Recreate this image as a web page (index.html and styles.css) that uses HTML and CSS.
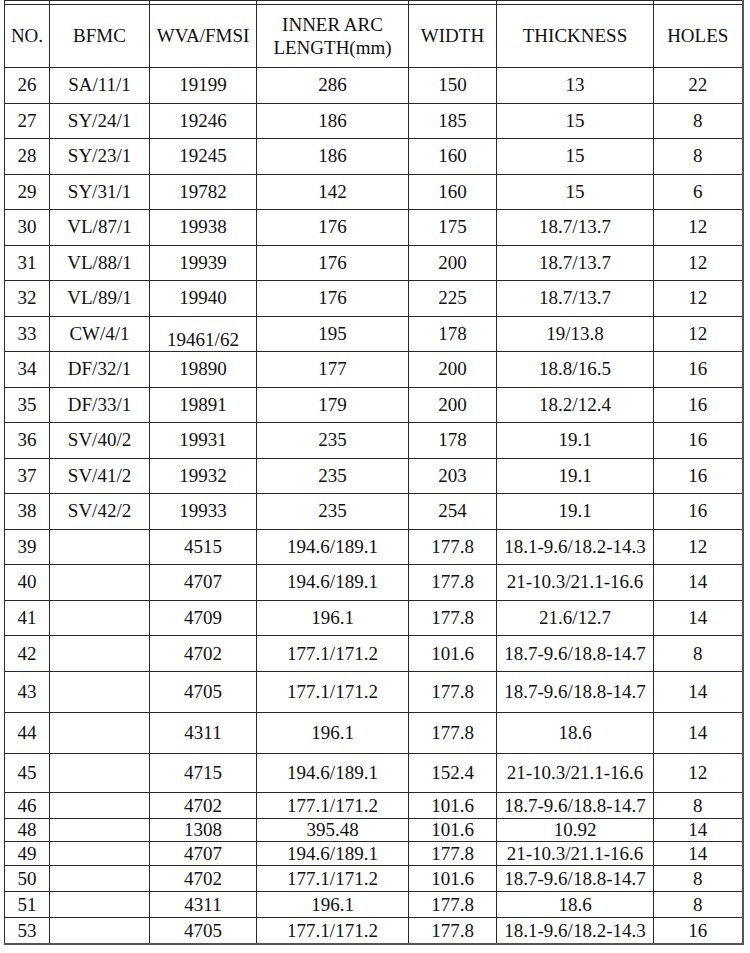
FILE: index.html
```html
<!DOCTYPE html>
<html>
<head>
<meta charset="utf-8">
<link rel="stylesheet" href="styles.css">
</head>
<body>
<table class="spec">
<colgroup>
<col class="c-no"><col class="c-bfmc"><col class="c-wva"><col class="c-arc"><col class="c-width"><col class="c-thick"><col class="c-holes">
</colgroup>
<tbody>
<tr class="r-top"><td></td><td></td><td></td><td></td><td></td><td></td><td></td></tr>
<tr class="r-head"><td>NO.</td><td>BFMC</td><td>WVA/FMSI</td><td class="two">INNER ARC<br>LENGTH(mm)</td><td>WIDTH</td><td>THICKNESS</td><td>HOLES</td></tr>
<tr class="r-std"><td>26</td><td>SA/11/1</td><td>19199</td><td>286</td><td>150</td><td>13</td><td>22</td></tr>
<tr class="r-std"><td>27</td><td>SY/24/1</td><td>19246</td><td>186</td><td>185</td><td>15</td><td>8</td></tr>
<tr class="r-std"><td>28</td><td>SY/23/1</td><td>19245</td><td>186</td><td>160</td><td>15</td><td>8</td></tr>
<tr class="r-std"><td>29</td><td>SY/31/1</td><td>19782</td><td>142</td><td>160</td><td>15</td><td>6</td></tr>
<tr class="r-std"><td>30</td><td>VL/87/1</td><td>19938</td><td>176</td><td>175</td><td>18.7/13.7</td><td>12</td></tr>
<tr class="r-std"><td>31</td><td>VL/88/1</td><td>19939</td><td>176</td><td>200</td><td>18.7/13.7</td><td>12</td></tr>
<tr class="r-std"><td>32</td><td>VL/89/1</td><td>19940</td><td>176</td><td>225</td><td>18.7/13.7</td><td>12</td></tr>
<tr class="r-std"><td>33</td><td>CW/4/1</td><td class="low">19461/62</td><td>195</td><td>178</td><td>19/13.8</td><td>12</td></tr>
<tr class="r-std"><td>34</td><td>DF/32/1</td><td>19890</td><td>177</td><td>200</td><td>18.8/16.5</td><td>16</td></tr>
<tr class="r-std"><td>35</td><td>DF/33/1</td><td>19891</td><td>179</td><td>200</td><td>18.2/12.4</td><td>16</td></tr>
<tr class="r-std"><td>36</td><td>SV/40/2</td><td>19931</td><td>235</td><td>178</td><td>19.1</td><td>16</td></tr>
<tr class="r-std"><td>37</td><td>SV/41/2</td><td>19932</td><td>235</td><td>203</td><td>19.1</td><td>16</td></tr>
<tr class="r-std"><td>38</td><td>SV/42/2</td><td>19933</td><td>235</td><td>254</td><td>19.1</td><td>16</td></tr>
<tr class="r-std"><td>39</td><td></td><td>4515</td><td>194.6/189.1</td><td>177.8</td><td>18.1-9.6/18.2-14.3</td><td>12</td></tr>
<tr class="r-std"><td>40</td><td></td><td>4707</td><td>194.6/189.1</td><td>177.8</td><td>21-10.3/21.1-16.6</td><td>14</td></tr>
<tr class="r-std"><td>41</td><td></td><td>4709</td><td>196.1</td><td>177.8</td><td>21.6/12.7</td><td>14</td></tr>
<tr class="r-42"><td>42</td><td></td><td>4702</td><td>177.1/171.2</td><td>101.6</td><td>18.7-9.6/18.8-14.7</td><td>8</td></tr>
<tr class="r-tall"><td>43</td><td></td><td>4705</td><td>177.1/171.2</td><td>177.8</td><td>18.7-9.6/18.8-14.7</td><td>14</td></tr>
<tr class="r-tall"><td>44</td><td></td><td>4311</td><td>196.1</td><td>177.8</td><td>18.6</td><td>14</td></tr>
<tr class="r-45"><td>45</td><td></td><td>4715</td><td>194.6/189.1</td><td>152.4</td><td>21-10.3/21.1-16.6</td><td>12</td></tr>
<tr class="r-s26"><td>46</td><td></td><td>4702</td><td>177.1/171.2</td><td>101.6</td><td>18.7-9.6/18.8-14.7</td><td>8</td></tr>
<tr class="r-s23"><td>48</td><td></td><td>1308</td><td>395.48</td><td>101.6</td><td>10.92</td><td>14</td></tr>
<tr class="r-s24"><td>49</td><td></td><td>4707</td><td>194.6/189.1</td><td>177.8</td><td>21-10.3/21.1-16.6</td><td>14</td></tr>
<tr class="r-s26"><td>50</td><td></td><td>4702</td><td>177.1/171.2</td><td>101.6</td><td>18.7-9.6/18.8-14.7</td><td>8</td></tr>
<tr class="r-s26"><td>51</td><td></td><td>4311</td><td>196.1</td><td>177.8</td><td>18.6</td><td>8</td></tr>
<tr class="r-s26 last"><td>53</td><td></td><td>4705</td><td>177.1/171.2</td><td>177.8</td><td>18.1-9.6/18.2-14.3</td><td>16</td></tr>
</tbody>
</table>
</body>
</html>
```

FILE: styles.css
```css
html, body {
  margin: 0;
  padding: 0;
  background: #ffffff;
}

.spec {
  margin-left: 4px;
  border-collapse: collapse;
  table-layout: fixed;
  width: 738px;
  font-family: "Liberation Serif", "Times New Roman", serif;
  font-size: 19px;
  color: #111;
}

.c-no { width: 45px; }
.c-bfmc { width: 100px; }
.c-wva { width: 107px; }
.c-arc { width: 152px; }
.c-width { width: 88px; }
.c-thick { width: 157px; }
.c-holes { width: 89px; }

.spec td {
  border: 1px solid #2a2a2a;
  padding: 0;
  text-align: center;
  vertical-align: middle;
  line-height: 20px;
  white-space: nowrap;
}

.spec td:last-child {
  border-right: 2px solid #555;
}

.spec tr.last td {
  border-bottom: 2px solid #555;
}

.spec td.two {
  line-height: 23px;
}

.r-top td { height: 3px; line-height: 0; }
.r-head td { height: 62px; }
.r-std td { height: 34.5px; }
.spec .r-std td.low { height: 22px; padding-top: 12px; }
.r-42 td { height: 35px; }
.r-tall td { height: 40px; }
.r-45 td { height: 38px; }
.r-s26 td { height: 25px; }
.r-s23 td { height: 22px; }
.r-s24 td { height: 23px; }
```
